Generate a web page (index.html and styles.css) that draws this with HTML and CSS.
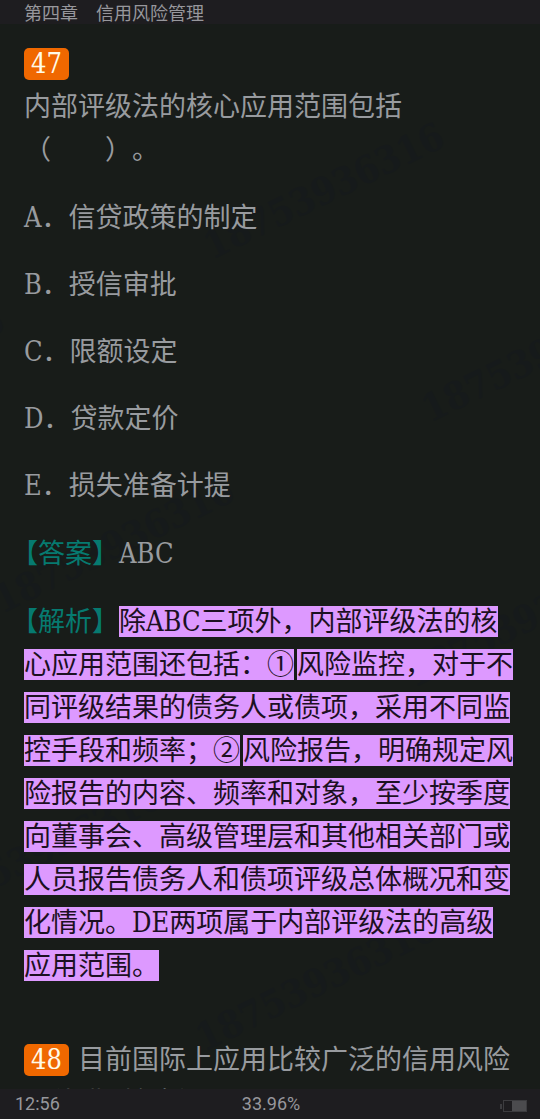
FILE: index.html
```html
<!DOCTYPE html>
<html lang="zh-CN">
<head>
    <meta charset="UTF-8">
    <meta name="viewport" content="width=device-width, initial-scale=1.0">
    <title>第四章 信用风险管理</title>
    <link rel="stylesheet" href="styles.css">
</head>
<body>
    <header class="chapter-bar">第四章　信用风险管理</header>

    <main class="reader">
        <svg class="watermark" aria-hidden="true">
            <text transform="translate(212 260) rotate(-26)">18753936316</text>
            <text transform="translate(430 423) rotate(-26)">18753936316</text>
            <text transform="translate(-228 444) rotate(-26)">18753936316</text>
            <text transform="translate(2 614) rotate(-26)">18753936316</text>
            <text transform="translate(414 688) rotate(-26)">18753936316</text>
            <text transform="translate(-70 920) rotate(-26)">18753936316</text>
            <text transform="translate(204 1052) rotate(-26)">18753936316</text>
        </svg>

        <article class="question">
            <p><span class="number">47</span><br>内部评级法的核心应用范围包括（　　）。</p>
            <ol class="options">
                <li>A．信贷政策的制定</li>
                <li>B．授信审批</li>
                <li>C．限额设定</li>
                <li>D．贷款定价</li>
                <li>E．损失准备计提</li>
            </ol>
            <p class="labelled"><span class="label">【答案】</span>ABC</p>
            <p class="labelled"><span class="label">【解析】</span><mark>除ABC三项外，内部评级法的核心应用范围还包括：①</mark><mark>风险监控，对于不同评级结果的债务人或债项，采用不同监控手段和频率；②</mark><mark>风险报告，明确规定风险报告的内容、频率和对象，至少按季度向董事会、高级管理层和其他相关部门或人员报告债务人和债项评级总体概况和变化情况。DE两项属于内部评级法的高级应用范围。</mark></p>
        </article>

        <article class="question">
            <p><span class="number">48</span>目前国际上应用比较广泛的信用风险评估模型包括（　　）。</p>
        </article>
    </main>

    <footer class="status-bar">
        <span>12:56</span>
        <span>33.96%</span>
        <svg class="battery" width="27" height="12" viewBox="0 0 27 12" role="img" aria-label="电量">
            <rect x="0" y="4" width="2" height="5" fill="#3c3c3f"/>
            <rect x="3.5" y="0.5" width="23" height="11" fill="none" stroke="#3c3c3f"/>
            <rect x="12" y="1" width="14" height="10" fill="#4b4b4e"/>
        </svg>
    </footer>
</body>
</html>
```
FILE: styles.css
```css
:root {
    --page: #181c19;
    --bar: #1e1d20;
    --text: #989b9f;
    --bar-text: #97979c;
    --label: #067a70;
    --badge: #f06800;
    --highlight: #dd99ff;
}
* { box-sizing: border-box; margin: 0; padding: 0; }
body {
    display: flex;
    flex-direction: column;
    height: 100vh;
    overflow: hidden;
    background: var(--page);
    color: var(--text);
    font-family: "DejaVu Serif Condensed", "Noto Sans CJK SC", serif;
    font-size: 27px;
    line-height: 43px;
    text-spacing-trim: space-all;
}
.chapter-bar {
    flex: none;
    padding: 0 24px;
    background: var(--bar);
    color: var(--bar-text);
    font-family: "Noto Sans CJK SC", sans-serif;
    font-size: 18px;
    line-height: 24px;
}
.reader {
    flex: 1;
    min-height: 0;
    padding: 18px 24px 0;
    overflow: hidden;
}
.watermark {
    position: absolute;
    top: 0;
    left: 0;
    z-index: -1;
    width: 100%;
    height: 100%;
    fill: #161a1b;
    font-size: 38px;
    font-weight: bold;
}
.question + .question { margin-top: 51px; }
.question p + p { margin-top: 25px; }
.options {
    display: grid;
    gap: 24px;
    margin: 25px 0;
    list-style: none;
}
.number {
    display: inline-block;
    margin-right: 9px;
    padding: 0 7px;
    border-radius: 5px;
    background: var(--badge);
    color: #fffbe8;
    line-height: 32px;
}
/* the opening bracket is blank on its left half */
.labelled { text-indent: -13px; }
.label { color: var(--label); }
.number, mark { text-indent: 0; }
mark {
    background: var(--highlight);
    color: #1c1022;
}
mark + mark { margin-left: 3px; }
.status-bar {
    flex: none;
    display: grid;
    grid-template-columns: 1fr auto 1fr;
    align-items: center;
    padding: 0 13px 0 15px;
    background: var(--bar);
    color: var(--bar-text);
    font-family: Roboto, sans-serif;
    font-size: 18px;
    line-height: 30px;
}
.battery { justify-self: end; margin-top: 3px; }
```
